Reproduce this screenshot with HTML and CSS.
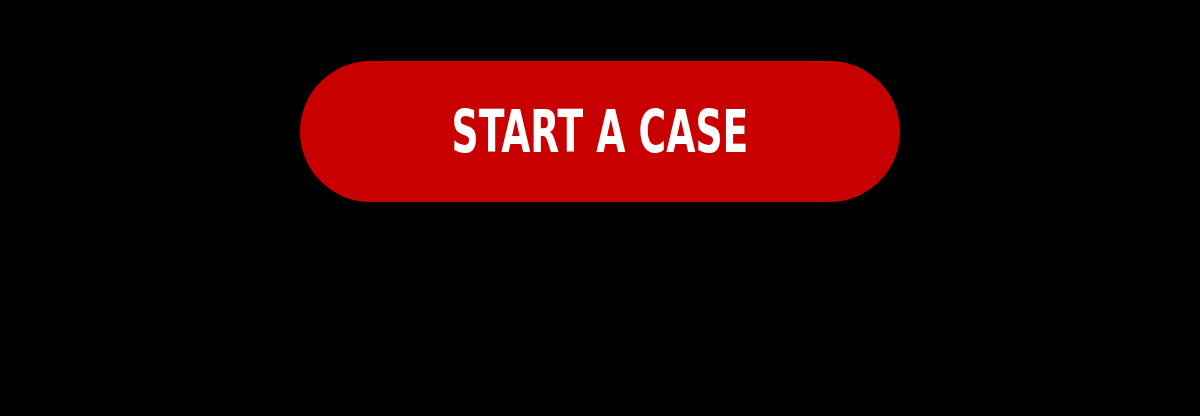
FILE: index.html
```html
<!DOCTYPE html>
<html lang="en">
<head>
<meta charset="utf-8">
<title>Start a case</title>
<link rel="stylesheet" href="styles.css">
</head>
<body>
<main class="page">
  <a class="cta" href="#"><span class="cta-label">START A CASE</span></a>
</main>
</body>
</html>
```

FILE: styles.css
```css
html, body {
  margin: 0;
  padding: 0;
  background: #000;
}
.page {
  width: 1200px;
  height: 416px;
  display: flex;
  justify-content: center;
  align-items: flex-start;
  padding-top: 61px;
  box-sizing: border-box;
}
.cta {
  width: 600px;
  height: 141px;
  border-radius: 71px;
  background: #c80000;
  display: flex;
  align-items: center;
  justify-content: center;
  text-decoration: none;
}
.cta-label {
  font-family: "DejaVu Sans Condensed", "DejaVu Sans", sans-serif;
  font-weight: 700;
  font-size: 59px;
  line-height: 1;
  color: #fff;
  display: inline-block;
  transform: scaleX(0.71);
  letter-spacing: 0;
}
```
